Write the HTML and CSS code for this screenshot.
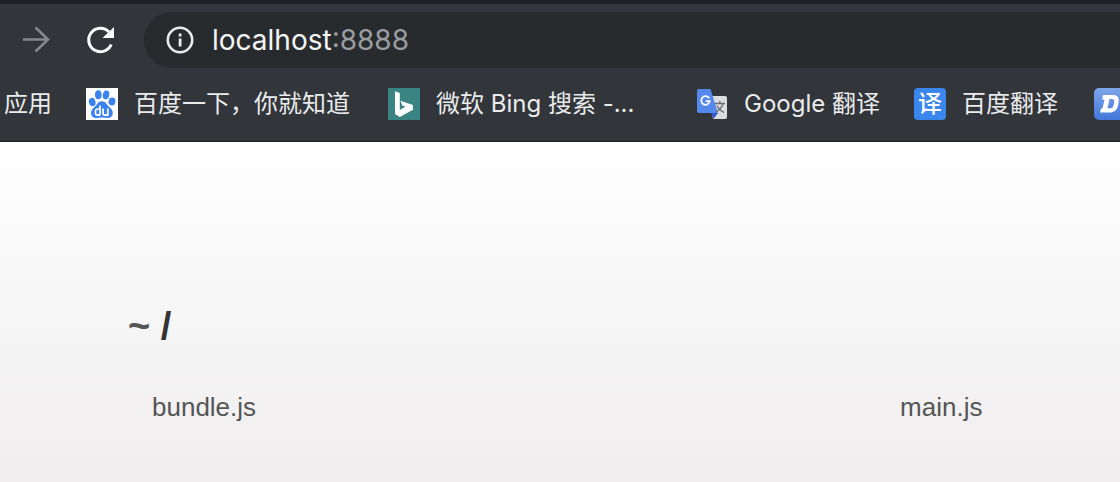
FILE: index.html
```html
<!DOCTYPE html>
<html lang="zh-CN">
<head>
<meta charset="utf-8">
<title>listing directory /</title>
<link rel="stylesheet" href="styles.css">
</head>
<body>
<header class="browser">
  <div class="toolbar">
    <button class="tool forward" type="button" aria-label="前进" disabled>
      <svg viewBox="0 0 32 32" fill="none" stroke="currentColor" stroke-width="2.6"><path d="M3 15.500h25M15.500 3.500l12.500 12-12.500 12"/></svg>
    </button>
    <button class="tool" type="button" aria-label="重新加载">
      <svg viewBox="0 0 32 32"><path d="M27.200 20.500A11.700 11.700 0 1 1 25 8" fill="none" stroke="currentColor" stroke-width="3"/><path d="M30 3v11H18.500z" fill="currentColor"/></svg>
    </button>
    <div class="address">
      <svg class="info" viewBox="0 0 28 28" aria-hidden="true"><circle cx="14" cy="14" r="12.2" fill="none" stroke="currentColor" stroke-width="2.6"/><path d="M12.700 7.500h2.800v3h-2.800zM12.700 12.500h2.800v8h-2.800z" fill="currentColor"/></svg>
      <input class="host" type="text" value="localhost" aria-label="地址"><span class="port">:8888</span>
    </div>
  </div>
  <nav class="bookmarks" aria-label="书签">
    <a class="bookmark" href="#apps">应用</a>
    <a class="bookmark" href="#baidu">
      <svg class="icon" viewBox="0 0 32 32" aria-hidden="true"><rect width="32" height="32" fill="#fff"/><g fill="#3b82ee"><ellipse cx="6.200" cy="14" rx="3.300" ry="4.200" transform="rotate(-15 6.200 14)"/><ellipse cx="12.300" cy="6.700" rx="3.300" ry="4.500"/><ellipse cx="20" cy="6.900" rx="3.200" ry="4.500" transform="rotate(12 20 6.900)"/><ellipse cx="26" cy="13.500" rx="3.400" ry="4" transform="rotate(12 26 13.500)"/><path d="M15.800 13.200c3.800 0 4.700 3.200 7 5.200 2 1.700 4 3.500 4 6.500 0 3.300-2.300 5-5.300 5-2 0-3.600-.5-5.500-.5s-3.600.5-5.700.5c-3 0-5.300-1.900-5.300-5 0-3 2-4.700 4-6.500 2.300-2 3-5.200 6.800-5.200z"/></g><path d="M14 17.500v9.800M14 21h-2.200c-1.500 0-2.300.8-2.300 2.300v1.700c0 1.400.8 2.100 2.300 2.100H14M17 20.500V25c0 1.400.7 2.100 2.100 2.100h2.700v-6.600" fill="none" stroke="#fff" stroke-width="1.700"/></svg>
      <span class="label long">百度一下，你就知道</span>
    </a>
    <a class="bookmark" href="#bing">
      <svg class="icon" viewBox="0 0 32 32" aria-hidden="true"><rect width="32" height="32" fill="#3a8583"/><path d="M7 3.200l4.800 1.700v17.200l5.600-3.300-3-1.400-2-4.700 12.500 4.200v4.800L11.800 29 7 26z" fill="#fff"/></svg>
      <span class="label longest">微软 Bing 搜索 -...</span>
    </a>
    <a class="bookmark" href="#google-translate">
      <svg class="icon" viewBox="0 0 32 32" aria-hidden="true"><path d="M13 8h16a2 2 0 0 1 2 2v19a2 2 0 0 1-2 2H17z" fill="#dcdddf"/><path d="M15 25h7l-4.500 6z" fill="#3558c5"/><path d="M3 1h11.500L22 25H3a2 2 0 0 1-2-2V3a2 2 0 0 1 2-2z" fill="#5589ed"/><path d="M13.200 10.200a4.300 4.300 0 1 0 .6 3H9.700" fill="none" stroke="#fff" stroke-width="1.700"/><path d="M19 15.500h10M23.800 13v2.500M27 15.500c-1 4-3.500 6.500-7 8.500M21 17.500c1.500 3.500 4 5.500 7.200 7" fill="none" stroke="#6d7073" stroke-width="1.300"/></svg>
      <span class="label medium">Google 翻译</span>
    </a>
    <a class="bookmark" href="#baidu-translate">
      <span class="icon translate" aria-hidden="true">译</span>
      <span class="label short">百度翻译</span>
    </a>
    <a class="bookmark" href="#d" aria-label="D">
      <svg class="icon" viewBox="0 0 32 32" aria-hidden="true"><defs><linearGradient id="blue" x2="0" y2="1"><stop stop-color="#7da5e9"/><stop offset="1" stop-color="#4277d8"/></linearGradient></defs><rect width="32" height="32" rx="5" fill="url(#blue)"/><path fill-rule="evenodd" d="M9 7h9.500c5 0 7 2.500 6 8l-.5 2.500c-1 4.800-3.700 7-8.500 7H6l1-4h1.500l2-9H8.200zM15.500 11l-2 9.300h2.300c2.300 0 3.300-1 3.900-3.600l.5-2.300c.5-2.400-.2-3.400-2.400-3.400z" fill="#fff"/></svg>
    </a>
  </nav>
</header>
<main class="page">
  <h1 class="path"><a class="home" href="#home">~</a> <a href="#root">/</a></h1>
  <ul class="files">
    <li><a href="#bundle.js">bundle.js</a></li>
    <li><a href="#main.js">main.js</a></li>
  </ul>
</main>
</body>
</html>
```
FILE: styles.css
```css
* {
  box-sizing: border-box;
}

body {
  display: flex;
  flex-direction: column;
  min-height: 100vh;
  margin: 0;
  overflow-x: hidden;
  font-family: "Liberation Sans", Arial, sans-serif;
}

a {
  color: inherit;
  text-decoration: none;
}

svg {
  display: block;
}

.browser {
  overflow: hidden;
  border-top: 4px solid #1e2226;
  border-bottom: 1px solid #1d1e20;
  background: #323539;
  color: #e9ebed;
  font-family: Inter, "Noto Sans CJK SC", sans-serif;
}

.toolbar {
  display: flex;
  align-items: center;
  padding: 8px 0 0 20px;
}

.tool {
  width: 32px;
  height: 32px;
  margin-right: 32px;
  padding: 0;
  border: 0;
  background: none;
  color: #fff;
}

.tool + .address {
  margin-left: -4px;
}

.forward {
  color: #85888b;
}

.address {
  display: flex;
  flex: 1;
  align-items: center;
  height: 56px;
  padding-left: 22px;
  border-radius: 28px 0 0 28px;
  background: #282b2d;
  font-size: 28px;
  line-height: 36px;
}

.info {
  width: 28px;
  height: 28px;
  margin-right: 18px;
}

.host {
  field-sizing: content;
  padding: 0;
  border: 0;
  background: none;
  color: #f4f5f6;
  font: inherit;
}

.port {
  color: #9a9da0;
}

.bookmarks {
  display: flex;
  align-items: center;
  gap: 34px;
  padding: 18px 0 19px 4px;
  font-size: 24px;
  line-height: 36px;
  white-space: nowrap;
}

.bookmark {
  display: flex;
  flex: none;
  align-items: center;
  gap: 16px;
}

.icon {
  width: 32px;
  height: 32px;
}

.translate {
  border-radius: 4px;
  background: #3b86ed;
  color: #fff;
  font-weight: 500;
  line-height: 32px;
  text-align: center;
}

.longest {
  width: 226px;
}

.long {
  width: 220px;
}

.medium {
  width: 136px;
}

.short {
  width: 98px;
}

.page {
  flex: 1;
  padding: 162px 0 0 128px;
  background: linear-gradient(#fff, #efedee);
  color: #555;
}

.path {
  margin: 0;
  color: #333;
  font-size: 38px;
  line-height: 44px;
}

.home {
  color: #555;
}

.files {
  display: grid;
  grid-template-columns: 46fr 15fr;
  margin: 0;
  padding: 41px 0 0;
  list-style: none;
  font-size: 26px;
  line-height: 36px;
}

.files li {
  padding-left: 24px;
}
```
